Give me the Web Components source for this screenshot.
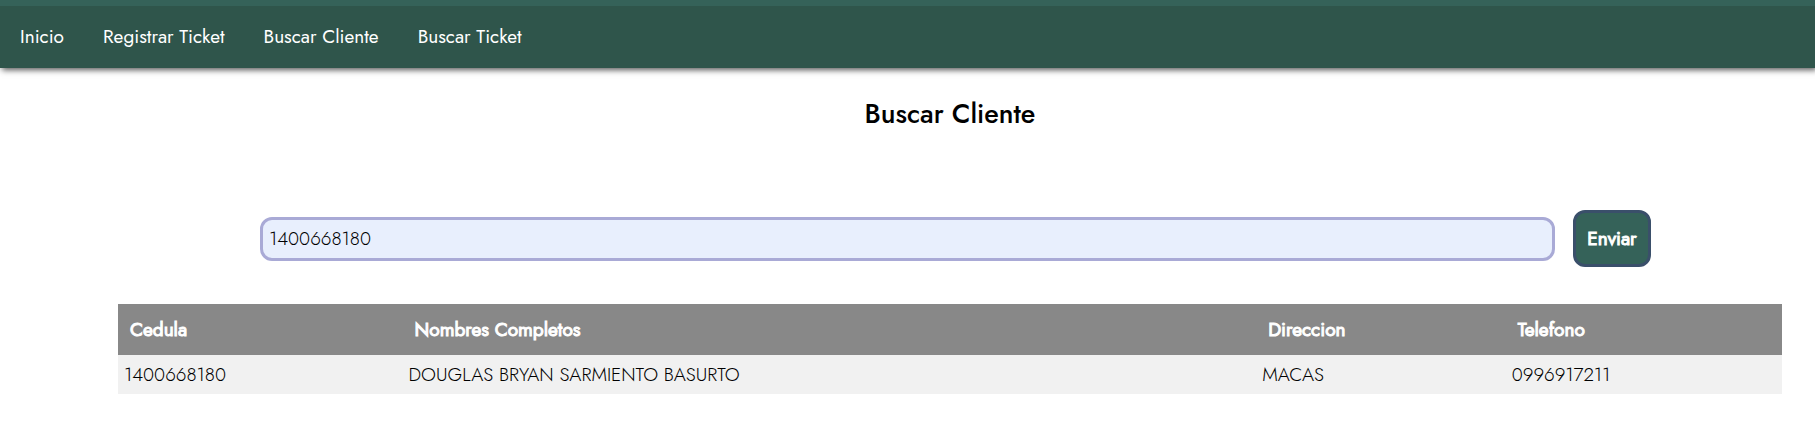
<!DOCTYPE html>
<html lang="es">
<head>
<meta charset="utf-8">
<title>Buscar Cliente</title>
<style>
body { margin: 0; background: #fff; color: #000; font: 400 19px/24px Jost, Lato, sans-serif; }
main { display: block; padding: 0 33px 0 118px; }
</style>
</head>
<body>
<nav-bar>
  <nav-link href="#inicio">Inicio</nav-link>
  <nav-link href="#registrar">Registrar Ticket</nav-link>
  <nav-link href="#cliente">Buscar Cliente</nav-link>
  <nav-link href="#ticket">Buscar Ticket</nav-link>
</nav-bar>
<main>
  <page-title>Buscar Cliente</page-title>
  <search-form value="1400668180">Enviar</search-form>
  <client-table></client-table>
</main>

<template id="nav-bar">
  <style>
    :host { display: block; border-top: 6px solid #356259; background: #2f554b; box-shadow: 2px 2px 6px #555; }
    nav { display: flex; height: 62px; align-items: center; }
  </style>
  <nav><slot></slot></nav>
</template>

<template id="nav-link">
  <style>
    :host { display: block; }
    a { display: block; padding: 0 19px 0 20px; color: #fff; text-decoration: none; white-space: nowrap; }
  </style>
  <a><slot></slot></a>
</template>

<template id="page-title">
  <style>
    :host { display: block; }
    h1 { margin: 28px 0 78px; font-size: 27px; line-height: 36px; font-weight: 500; text-align: center; }
  </style>
  <h1><slot></slot></h1>
</template>

<template id="search-form">
  <style>
    :host { display: block; }
    form { display: flex; align-items: center; gap: 18px; margin: 0 131px 37px 142px; }
    input { flex: 1; min-width: 0; box-sizing: border-box; height: 44px; margin: 0; padding: 0 6px; border: 3px solid #a9aad6; border-radius: 12px; background: #e8effd; color: #000; font: inherit; font-weight: 300; outline: none; }
    button { box-sizing: border-box; width: 78px; height: 57px; padding: 0; border: 3px solid #3a4f6a; border-radius: 12px; background: #356259; color: #fff; font: inherit; -webkit-text-stroke: 1px #fff; }
  </style>
  <form>
    <input type="text" name="cedula" aria-label="Cedula">
    <button type="button"><slot></slot></button>
  </form>
</template>

<template id="client-table">
  <style>
    :host { display: block; }
    table { width: 100%; border-collapse: collapse; table-layout: fixed; }
    th { height: 51px; padding: 0 12px; background: #888; color: #fff; text-align: left; font-weight: 400; -webkit-text-stroke: 1px #fff; }
    td { height: 39px; padding: 0 6px; background: #f1f1f1; font-weight: 300; }
    .id { width: 17.1%; }
    .name { width: 51.3%; }
    .address { width: 15%; }
  </style>
  <table>
    <colgroup><col class="id"><col class="name"><col class="address"><col></colgroup>
    <thead>
      <tr><th>Cedula</th><th>Nombres Completos</th><th>Direccion</th><th>Telefono</th></tr>
    </thead>
    <tbody>
      <tr><td>1400668180</td><td>DOUGLAS BRYAN SARMIENTO BASURTO</td><td>MACAS</td><td>0996917211</td></tr>
    </tbody>
  </table>
</template>

<script>
class TemplateElement extends HTMLElement {
  constructor() {
    super();
    const template = document.getElementById(this.localName);
    this.attachShadow({ mode: "open" }).append(template.content.cloneNode(true));
  }
}
customElements.define("nav-bar", class extends TemplateElement {});
customElements.define("nav-link", class extends TemplateElement {
  connectedCallback() {
    this.shadowRoot.querySelector("a").href = this.getAttribute("href");
  }
});
customElements.define("page-title", class extends TemplateElement {});
customElements.define("search-form", class extends TemplateElement {
  connectedCallback() {
    this.shadowRoot.querySelector("input").value = this.getAttribute("value") || "";
  }
});
customElements.define("client-table", class extends TemplateElement {});
</script>
</body>
</html>
